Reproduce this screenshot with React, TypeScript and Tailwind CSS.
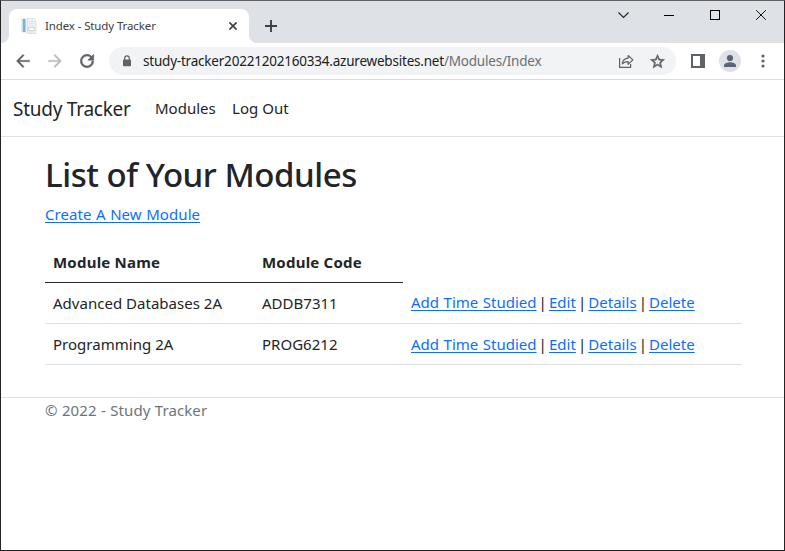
import React from 'react';

const modules = [
  { name: 'Advanced Databases 2A', code: 'ADDB7311' },
  { name: 'Programming 2A', code: 'PROG6212' },
];

function TabStrip() {
  return (
    <div className="flex h-[42px] shrink-0 bg-[#dee1e6] text-[#3c4043]">
      <div className="flex w-2 items-end bg-white">
        <div className="h-full w-2 rounded-br-lg bg-[#dee1e6]" />
      </div>
      <div className="mt-2 flex h-[34px] w-60 items-center rounded-t-lg bg-white pl-3">
        <svg className="h-4 w-4 shrink-0" viewBox="0 0 16 16">
          <rect x="1" y="0" width="14" height="15" fill="#eef1f4" />
          <rect x="0.5" y="1" width="1.5" height="13" fill="#c7dcec" />
          <rect x="2" y="1" width="2.5" height="13" fill="#76b3dd" />
          <path d="M6.5.5h5l3.5 3v12H6.5z" fill="#f1f3f5" stroke="#d3d8dd" strokeWidth=".7" />
          <path d="M8 3.5h3M8 5.5h5M8 7.5h5M8 14h5" stroke="#dde2e6" />
          <rect x="7.5" y="9.5" width="6" height="3" fill="#fff" stroke="#c5cdd4" strokeWidth=".8" />
          <path d="M11.5.5v3H15" fill="#fff" stroke="#d0d5da" strokeWidth=".7" />
        </svg>
        <span className="ml-2 w-[184px] text-[11.5px] tracking-[-0.12px] whitespace-nowrap">Index - Study Tracker</span>
        <svg className="h-2 w-2 shrink-0" viewBox="0 0 8 8" fill="none" stroke="#3c4043" strokeWidth="1.6">
          <path d="M.4.4l7.2 7.2M7.6.4L.4 7.6" />
        </svg>
      </div>
      <div className="w-2 bg-white">
        <div className="h-full w-2 rounded-bl-lg bg-[#dee1e6]" />
      </div>
      <svg className="mt-[19px] ml-[8px] h-3 w-3" viewBox="0 0 12 12" fill="none" stroke="#3c4043" strokeWidth="1.9">
        <path d="M6 0v12M0 6h12" />
      </svg>
      <div className="ml-auto flex pt-[8px] text-black">
        <svg className="mr-[35px] h-3 w-[11px]" viewBox="0 0 11 12" fill="none" stroke="#222" strokeWidth="1.1">
          <path d="M.5 3.5l5 5 5-5" />
        </svg>
        <svg className="mr-[36px] h-3 w-[10px]" viewBox="0 0 10 12" fill="none" stroke="#000">
          <path d="M0 6.5h10" />
        </svg>
        <svg className="mr-[36px] h-3 w-[10px]" viewBox="0 0 10 12" fill="none" stroke="#000">
          <rect x=".5" y="1.5" width="9" height="9" />
        </svg>
        <svg className="mr-[18px] h-3 w-[10px]" viewBox="0 0 10 12" fill="none" stroke="#111">
          <path d="M.2 1.2l9.6 9.6M9.8 1.2L.2 10.8" />
        </svg>
      </div>
    </div>
  );
}

function Toolbar() {
  return (
    <div className="flex h-[37px] shrink-0 items-center border-b border-[#dadce0] bg-white pl-3">
      <svg className="h-5 w-5" viewBox="0 0 24 24" fill="#5f6368" stroke="#5f6368" strokeWidth=".3">
        <path d="M20 11H7.83l5.59-5.59L12 4l-8 8 8 8 1.41-1.41L7.83 13H20v-2z" />
      </svg>
      <svg className="ml-[12px] h-5 w-5 rotate-180" viewBox="0 0 24 24" fill="#babcbe" stroke="#babcbe" strokeWidth=".3">
        <path d="M20 11H7.83l5.59-5.59L12 4l-8 8 8 8 1.41-1.41L7.83 13H20v-2z" />
      </svg>
      <svg className="ml-[12px] h-5 w-5" viewBox="0 0 24 24" fill="#5f6368">
        <path d="M17.65 6.35A7.96 7.96 0 0012 4a8 8 0 108 8h-2a6 6 0 11-1.76-4.24L13 11h7V4l-2.35 2.35z" stroke="#5f6368" strokeWidth=".7" />
      </svg>
      <div className="ml-3 flex h-7 w-[567px] items-center rounded-full bg-[#f1f3f4] pl-3.5">
        <svg className="h-3 w-2 shrink-0" viewBox="0 0 8 12">
          <path d="M1.7 5V3.1a2.3 2.3 0 014.6 0V5" fill="none" stroke="#5f6368" strokeWidth="1.2" />
          <rect y="4.5" width="8" height="6.8" rx=".8" fill="#5f6368" />
        </svg>
        <span className="ml-[12px] w-[475px] text-[13.5px] tracking-[-0.21px] whitespace-nowrap text-[#202124]">
          study-tracker20221202160334.azurewebsites.net<span className="text-[#6b6f73]">/Modules/Index</span>
        </span>
        <svg className="h-4 w-4 shrink-0" viewBox="0 0 16 16" fill="none" stroke="#5f6368" strokeWidth="1.2">
          <path d="M1.6 5v9.4h11V11" />
          <path d="M4.3 10.8c.4-3.5 2.2-5.4 5.8-5.6V2.5l4.8 4.4-4.8 4.4V8.6C7.4 8.6 5.8 9.2 4.3 10.8z" strokeLinejoin="round" />
        </svg>
        <svg className="ml-[15px] h-[17px] w-[17px] shrink-0" viewBox="0 0 24 24" fill="#5f6368" stroke="#5f6368" strokeWidth=".8">
          <path d="M22 9.24l-7.19-.62L12 2 9.19 8.63 2 9.24l5.46 4.73L5.82 21 12 17.27 18.18 21l-1.63-7.03L22 9.24zM12 15.4l-3.76 2.27 1-4.28-3.32-2.88 4.38-.38L12 6.1l1.71 4.04 4.38.38-3.32 2.88 1 4.28L12 15.4z" />
        </svg>
      </div>
      <svg className="ml-[15px] h-[14px] w-[14px]" viewBox="0 0 14 14">
        <path d="M0 0h14v14H0z" fill="#5f6368" />
        <path d="M2 2h7v10H2z" fill="#fff" />
      </svg>
      <svg className="ml-[14px] h-[22px] w-[22px]" viewBox="0 0 22 22">
        <circle cx="11" cy="11" r="11" fill="#dee1e6" />
        <circle cx="11" cy="8" r="3.1" fill="#5a6378" />
        <path d="M5 17v-1.6c0-2 4-3.1 6-3.1s6 1.1 6 3.1V17z" fill="#5a6378" />
      </svg>
      <svg className="ml-[20px] h-[14px] w-1" viewBox="0 0 4 14" fill="#5f6368">
        <circle cx="2" cy="2" r="1.6" />
        <circle cx="2" cy="7" r="1.6" />
        <circle cx="2" cy="12" r="1.6" />
      </svg>
    </div>
  );
}

function Link({ children }: { children: React.ReactNode }) {
  return (
    <a href="#" className="text-[#0d6efd] underline decoration-1 underline-offset-2">
      {children}
    </a>
  );
}

function Separator() {
  return <span className="inline-block w-[12.4px] text-center">|</span>;
}

export default function App() {
  return (
    <div className="flex h-[551px] w-[785px] flex-col overflow-hidden border border-[#242424] border-t-[#626366] bg-white font-['Noto_Sans','Open_Sans',sans-serif] text-[15px] leading-6 text-[#212529]">
      <TabStrip />
      <Toolbar />
      <nav className="flex h-[57px] shrink-0 items-center border-b border-[#dee2e6] pl-3 whitespace-nowrap">
        <span className="w-[142px] pt-0.5 text-[19px] tracking-[-0.25px]">Study Tracker</span>
        <span className="w-[77px]">Modules</span>
        <span className="tracking-[0.05px]">Log Out</span>
      </nav>
      <main className="h-[260px] shrink-0 px-11 pt-4">
        <h1 className="h-[49px] text-[33px] leading-[44px] font-medium tracking-[-0.45px] whitespace-nowrap">List of Your Modules</h1>
        <p className="h-[40px] tracking-[0.07px] [word-spacing:0.5px]">
          <Link>Create A New Module</Link>
        </p>
        <table className="w-[697px] table-fixed border-separate border-spacing-0 text-left tracking-[0.02px] whitespace-nowrap">
          <thead>
            <tr className="h-[41px] tracking-[0.22px]">
              <th className="w-[209px] border-b border-[#212529] px-2 py-0 font-bold">Module Name</th>
              <th className="w-[149px] border-b border-[#212529] px-2 py-0 font-bold">Module Code</th>
              <th />
            </tr>
          </thead>
          <tbody>
            {modules.map((m, i) => (
              <tr key={m.code} className="h-[41px]">
                <td className="border-b border-[#dee2e6] px-2 py-0">{m.name}</td>
                <td className="border-b border-[#dee2e6] px-2 py-0">{m.code}</td>
                <td className={`border-b border-[#dee2e6] px-2 pt-0 [word-spacing:0.5px] ${i === 0 ? 'pb-0.5' : 'pb-0'}`}>
                  <Link>Add Time Studied</Link>
                  <Separator />
                  <Link>Edit</Link>
                  <Separator />
                  <Link>Details</Link>
                  <Separator />
                  <Link>Delete</Link>
                </td>
              </tr>
            ))}
          </tbody>
        </table>
      </main>
      <footer className="border-t border-[#dee2e6] px-11 tracking-[0.08px] text-[#6c757d] [word-spacing:0.4px]">© 2022 - Study Tracker</footer>
    </div>
  );
}
